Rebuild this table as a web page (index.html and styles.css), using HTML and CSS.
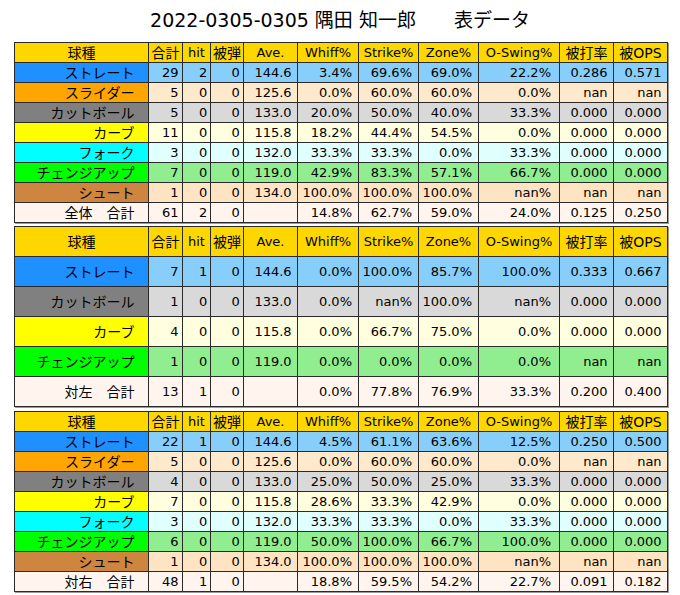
FILE: index.html
```html
<!DOCTYPE html>
<html lang="ja">
<head>
<meta charset="utf-8">
<title>表データ</title>
<link rel="stylesheet" href="styles.css">
</head>
<body>
<div class="page">
  <h1 class="title">2022-0305-0305 隅田 知一郎　　表データ</h1>

  <table class="stats rows-s">
    <colgroup><col><col><col><col><col><col><col><col><col><col><col></colgroup>
    <tr class="hd"><td class="jp">球種</td><td class="jp">合計</td><td>hit</td><td class="jp">被弾</td><td>Ave.</td><td>Whiff%</td><td>Strike%</td><td>Zone%</td><td>O-Swing%</td><td class="jp">被打率</td><td class="jp">被OPS</td></tr>
    <tr class="r-st"><td class="lb">ストレート</td><td>29</td><td>2</td><td>0</td><td>144.6</td><td>3.4%</td><td>69.6%</td><td>69.0%</td><td>22.2%</td><td>0.286</td><td>0.571</td></tr>
    <tr class="r-sl"><td class="lb">スライダー</td><td>5</td><td>0</td><td>0</td><td>125.6</td><td>0.0%</td><td>60.0%</td><td>60.0%</td><td>0.0%</td><td>nan</td><td>nan</td></tr>
    <tr class="r-ct"><td class="lb">カットボール</td><td>5</td><td>0</td><td>0</td><td>133.0</td><td>20.0%</td><td>50.0%</td><td>40.0%</td><td>33.3%</td><td>0.000</td><td>0.000</td></tr>
    <tr class="r-cv"><td class="lb">カーブ</td><td>11</td><td>0</td><td>0</td><td>115.8</td><td>18.2%</td><td>44.4%</td><td>54.5%</td><td>0.0%</td><td>0.000</td><td>0.000</td></tr>
    <tr class="r-fk"><td class="lb">フォーク</td><td>3</td><td>0</td><td>0</td><td>132.0</td><td>33.3%</td><td>33.3%</td><td>0.0%</td><td>33.3%</td><td>0.000</td><td>0.000</td></tr>
    <tr class="r-ch"><td class="lb">チェンジアップ</td><td>7</td><td>0</td><td>0</td><td>119.0</td><td>42.9%</td><td>83.3%</td><td>57.1%</td><td>66.7%</td><td>0.000</td><td>0.000</td></tr>
    <tr class="r-sh"><td class="lb">シュート</td><td>1</td><td>0</td><td>0</td><td>134.0</td><td>100.0%</td><td>100.0%</td><td>100.0%</td><td>nan%</td><td>nan</td><td>nan</td></tr>
    <tr class="r-tot"><td class="lb">全体　合計</td><td>61</td><td>2</td><td>0</td><td></td><td>14.8%</td><td>62.7%</td><td>59.0%</td><td>24.0%</td><td>0.125</td><td>0.250</td></tr>
  </table>

  <table class="stats rows-l">
    <colgroup><col><col><col><col><col><col><col><col><col><col><col></colgroup>
    <tr class="hd"><td class="jp">球種</td><td class="jp">合計</td><td>hit</td><td class="jp">被弾</td><td>Ave.</td><td>Whiff%</td><td>Strike%</td><td>Zone%</td><td>O-Swing%</td><td class="jp">被打率</td><td class="jp">被OPS</td></tr>
    <tr class="r-st"><td class="lb">ストレート</td><td>7</td><td>1</td><td>0</td><td>144.6</td><td>0.0%</td><td>100.0%</td><td>85.7%</td><td>100.0%</td><td>0.333</td><td>0.667</td></tr>
    <tr class="r-ct"><td class="lb">カットボール</td><td>1</td><td>0</td><td>0</td><td>133.0</td><td>0.0%</td><td>nan%</td><td>100.0%</td><td>nan%</td><td>0.000</td><td>0.000</td></tr>
    <tr class="r-cv"><td class="lb">カーブ</td><td>4</td><td>0</td><td>0</td><td>115.8</td><td>0.0%</td><td>66.7%</td><td>75.0%</td><td>0.0%</td><td>0.000</td><td>0.000</td></tr>
    <tr class="r-ch"><td class="lb">チェンジアップ</td><td>1</td><td>0</td><td>0</td><td>119.0</td><td>0.0%</td><td>0.0%</td><td>0.0%</td><td>0.0%</td><td>nan</td><td>nan</td></tr>
    <tr class="r-tot"><td class="lb">対左　合計</td><td>13</td><td>1</td><td>0</td><td></td><td>0.0%</td><td>77.8%</td><td>76.9%</td><td>33.3%</td><td>0.200</td><td>0.400</td></tr>
  </table>

  <table class="stats rows-s">
    <colgroup><col><col><col><col><col><col><col><col><col><col><col></colgroup>
    <tr class="hd"><td class="jp">球種</td><td class="jp">合計</td><td>hit</td><td class="jp">被弾</td><td>Ave.</td><td>Whiff%</td><td>Strike%</td><td>Zone%</td><td>O-Swing%</td><td class="jp">被打率</td><td class="jp">被OPS</td></tr>
    <tr class="r-st"><td class="lb">ストレート</td><td>22</td><td>1</td><td>0</td><td>144.6</td><td>4.5%</td><td>61.1%</td><td>63.6%</td><td>12.5%</td><td>0.250</td><td>0.500</td></tr>
    <tr class="r-sl"><td class="lb">スライダー</td><td>5</td><td>0</td><td>0</td><td>125.6</td><td>0.0%</td><td>60.0%</td><td>60.0%</td><td>0.0%</td><td>nan</td><td>nan</td></tr>
    <tr class="r-ct"><td class="lb">カットボール</td><td>4</td><td>0</td><td>0</td><td>133.0</td><td>25.0%</td><td>50.0%</td><td>25.0%</td><td>33.3%</td><td>0.000</td><td>0.000</td></tr>
    <tr class="r-cv"><td class="lb">カーブ</td><td>7</td><td>0</td><td>0</td><td>115.8</td><td>28.6%</td><td>33.3%</td><td>42.9%</td><td>0.0%</td><td>0.000</td><td>0.000</td></tr>
    <tr class="r-fk"><td class="lb">フォーク</td><td>3</td><td>0</td><td>0</td><td>132.0</td><td>33.3%</td><td>33.3%</td><td>0.0%</td><td>33.3%</td><td>0.000</td><td>0.000</td></tr>
    <tr class="r-ch"><td class="lb">チェンジアップ</td><td>6</td><td>0</td><td>0</td><td>119.0</td><td>50.0%</td><td>100.0%</td><td>66.7%</td><td>100.0%</td><td>0.000</td><td>0.000</td></tr>
    <tr class="r-sh"><td class="lb">シュート</td><td>1</td><td>0</td><td>0</td><td>134.0</td><td>100.0%</td><td>100.0%</td><td>100.0%</td><td>nan%</td><td>nan</td><td>nan</td></tr>
    <tr class="r-tot"><td class="lb">対右　合計</td><td>48</td><td>1</td><td>0</td><td></td><td>18.8%</td><td>59.5%</td><td>54.2%</td><td>22.7%</td><td>0.091</td><td>0.182</td></tr>
  </table>
</div>
</body>
</html>
```

FILE: styles.css
```css
html, body {
  margin: 0;
  padding: 0;
  background: #ffffff;
}

.page {
  width: 680px;
  height: 595px;
  display: flex;
  flex-direction: column;
  align-items: flex-start;
  font-family: "DejaVu Sans", "Noto Sans CJK JP", sans-serif;
  color: #000;
}

.title {
  align-self: stretch;
  margin: 0;
  height: 42px;
  line-height: 40px;
  font-size: 19px;
  font-weight: normal;
  text-align: center;
}

.stats {
  margin-left: 14px;
  border-collapse: collapse;
  table-layout: fixed;
  width: 653px;
  font-size: 13px;
  box-shadow: 1px 1px 0 #9a9a9a;
}

.stats + .stats {
  margin-top: 3px;
}

.stats:last-child {
  margin-top: 4px;
}

.stats col:nth-child(1) { width: 134px; }
.stats col:nth-child(2) { width: 34px; }
.stats col:nth-child(3) { width: 28px; }
.stats col:nth-child(4) { width: 33px; }
.stats col:nth-child(5) { width: 54px; }
.stats col:nth-child(6) { width: 61px; }
.stats col:nth-child(7) { width: 60px; }
.stats col:nth-child(8) { width: 60px; }
.stats col:nth-child(9) { width: 81px; }
.stats col:nth-child(10) { width: 54px; }
.stats col:nth-child(11) { width: 54px; }

.stats td {
  border: 1px solid #2a2a2a;
  padding: 0;
  text-align: right;
  vertical-align: middle;
  white-space: nowrap;
  line-height: 16px;
}

.rows-s tr { height: 20px; }
.rows-l tr { height: 30px; }

.stats td:nth-child(1) { padding-right: 13.5px; }
.stats td:nth-child(2) { padding-right: 3.4px; }
.stats td:nth-child(3) { padding-right: 2.8px; }
.stats td:nth-child(4) { padding-right: 3.3px; }
.stats td:nth-child(5) { padding-right: 5.4px; }
.stats td:nth-child(6) { padding-right: 6px; }
.stats td:nth-child(7) { padding-right: 6px; }
.stats td:nth-child(8) { padding-right: 6px; }
.stats td:nth-child(9) { padding-right: 8px; }
.stats td:nth-child(10) { padding-right: 5.4px; }
.stats td:nth-child(11) { padding-right: 5.4px; }

.stats .hd td {
  background: #ffd700;
  text-align: center;
  padding-right: 0;
}

.stats .jp,
.stats .lb {
  font-size: 14px;
}

.r-st td { background: #87cefa; }
.r-st .lb { background: #1e90ff; }

.r-sl td { background: #ffe9cc; }
.r-sl .lb { background: #ffa500; }

.r-ct td { background: #d9d9d9; }
.r-ct .lb { background: #808080; }

.r-cv td { background: #ffffe0; }
.r-cv .lb { background: #ffff00; }

.r-fk td { background: #e0ffff; }
.r-fk .lb { background: #00ffff; }

.r-ch td { background: #90ee90; }
.r-ch .lb { background: #00ff00; }

.r-sh td { background: #ffe4c4; }
.r-sh .lb { background: #cd853f; }

.r-tot td { background: #fff5ee; }
```
